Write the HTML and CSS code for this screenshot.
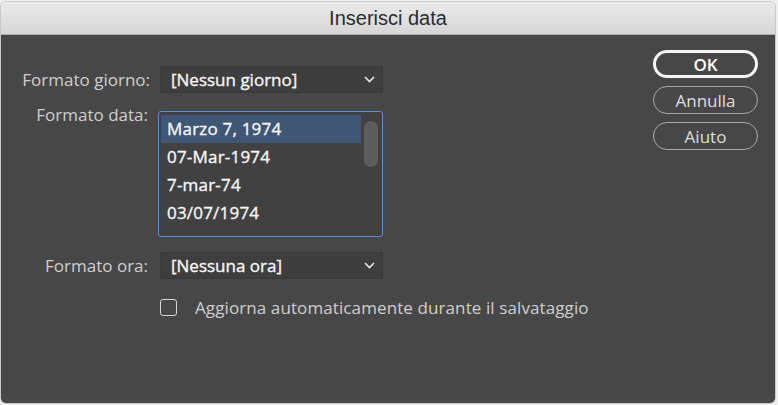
FILE: index.html
```html
<!DOCTYPE html>
<html lang="it">
<head>
<meta charset="utf-8">
<title>Inserisci data</title>
<link rel="stylesheet" href="styles.css">
</head>
<body>
<div class="window">
  <div class="titlebar">Inserisci data</div>
  <div class="content">
    <div class="form">
      <div class="label">Formato giorno:</div>
      <div class="select">
        <span class="select-value">[Nessun giorno]</span>
        <svg class="chevron" width="11" height="7" viewBox="0 0 11 7"><polyline points="1,1 5.5,5.5 10,1" fill="none" stroke="#e8e8e8" stroke-width="1.6"/></svg>
      </div>

      <div class="label label-top">Formato data:</div>
      <div class="listbox">
        <div class="list-rows">
          <div class="list-row selected">Marzo 7, 1974</div>
          <div class="list-row">07-Mar-1974</div>
          <div class="list-row">7-mar-74</div>
          <div class="list-row">03/07/1974</div>
        </div>
        <div class="scrollbar"><div class="thumb"></div></div>
      </div>

      <div class="label label-ora">Formato ora:</div>
      <div class="select select-ora">
        <span class="select-value">[Nessuna ora]</span>
        <svg class="chevron" width="11" height="7" viewBox="0 0 11 7"><polyline points="1,1 5.5,5.5 10,1" fill="none" stroke="#e8e8e8" stroke-width="1.6"/></svg>
      </div>

      <label class="check-row">
        <span class="checkbox"></span>
        <span class="check-text">Aggiorna automaticamente durante il salvataggio</span>
      </label>
    </div>
    <div class="buttons">
      <div class="btn btn-default">OK</div>
      <div class="btn">Annulla</div>
      <div class="btn">Aiuto</div>
    </div>
  </div>
</div>
</body>
</html>
```

FILE: styles.css
```css
html, body {
  margin: 0;
  padding: 0;
}
body {
  background: #efefef;
  width: 778px;
  height: 405px;
  overflow: hidden;
  font-family: "Open Sans", "Noto Sans", sans-serif;
}
.window {
  margin: 2px 3px 2px 1px;
  height: 401px;
  border-radius: 5px;
  overflow: hidden;
  display: flex;
  flex-direction: column;
  box-shadow: 0 0 0 1px #c9c9c9;
}
.titlebar {
  height: 32px;
  flex: none;
  background: linear-gradient(#ebebeb, #d6d6d6);
  border-bottom: 1px solid #b0b0b0;
  color: #2b2b2b;
  font-family: "Liberation Sans", Arial, sans-serif;
  font-size: 20px;
  line-height: 33px;
  text-align: center;
}
.content {
  flex: 1;
  background: #474747;
  display: flex;
  justify-content: space-between;
  padding: 15px 17px 0 0;
}
.form {
  display: grid;
  grid-template-columns: 149px 225px;
  column-gap: 10px;
  align-items: center;
  align-content: start;
  padding-top: 16px;
}
.label {
  text-align: right;
  color: #cfcfcf;
  font-size: 17px;
  white-space: nowrap;
}
.label-top {
  align-self: start;
  margin-top: 10px;
  padding-right: 2px;
}
.label-ora {
  padding-right: 2px;
  margin-top: 15px;
}
.select {
  width: 223px;
  height: 27px;
  box-sizing: border-box;
  background: #3e3e3e;
  border: 1px solid #393939;
  border-radius: 2px;
  display: flex;
  align-items: center;
  justify-content: space-between;
  padding: 0 7px 0 10px;
}
.select-value {
  color: #f6f6f6;
  font-size: 17px;
  -webkit-text-stroke: 0.35px #f6f6f6;
}
.chevron {
  display: block;
}
.listbox {
  margin-top: 18px;
  margin-left: -2px;
  width: 225px;
  height: 126px;
  box-sizing: border-box;
  border: 1.5px solid #5b8ed3;
  border-radius: 3px;
  background: #414141;
  display: flex;
  padding: 3px 2px 3px 2px;
}
.list-rows {
  flex: 1;
}
.list-row {
  height: 28px;
  line-height: 28px;
  padding-left: 6px;
  color: #f6f6f6;
  font-size: 17px;
  -webkit-text-stroke: 0.35px #f6f6f6;
  letter-spacing: 0.2px;
}
.list-row.selected {
  background: #3f5675;
}
.scrollbar {
  width: 19px;
  display: flex;
  justify-content: center;
  padding-top: 6px;
}
.thumb {
  width: 14px;
  height: 46px;
  border-radius: 7px;
  background: #5d5d5d;
}
.select-ora {
  margin-top: 15px;
}
.check-row {
  grid-column: 2;
  display: flex;
  align-items: center;
  margin-top: 17px;
}
.checkbox {
  width: 17px;
  height: 17px;
  box-sizing: border-box;
  border: 1.5px solid #d6d6d6;
  border-radius: 3px;
  flex: none;
}
.check-text {
  margin-left: 18px;
  color: #cfcfcf;
  font-size: 17px;
  white-space: nowrap;
  letter-spacing: 0.1px;
}
.buttons {
  display: flex;
  flex-direction: column;
  gap: 8px;
  width: 105px;
}
.btn {
  height: 28px;
  box-sizing: border-box;
  border: 1.5px solid #a8a8a8;
  border-radius: 14px;
  color: #dedede;
  font-size: 17px;
  display: flex;
  align-items: center;
  justify-content: center;
}
.btn-default {
  border: 3px solid #f5f5f5;
  color: #ffffff;
  font-weight: 600;
}
```
